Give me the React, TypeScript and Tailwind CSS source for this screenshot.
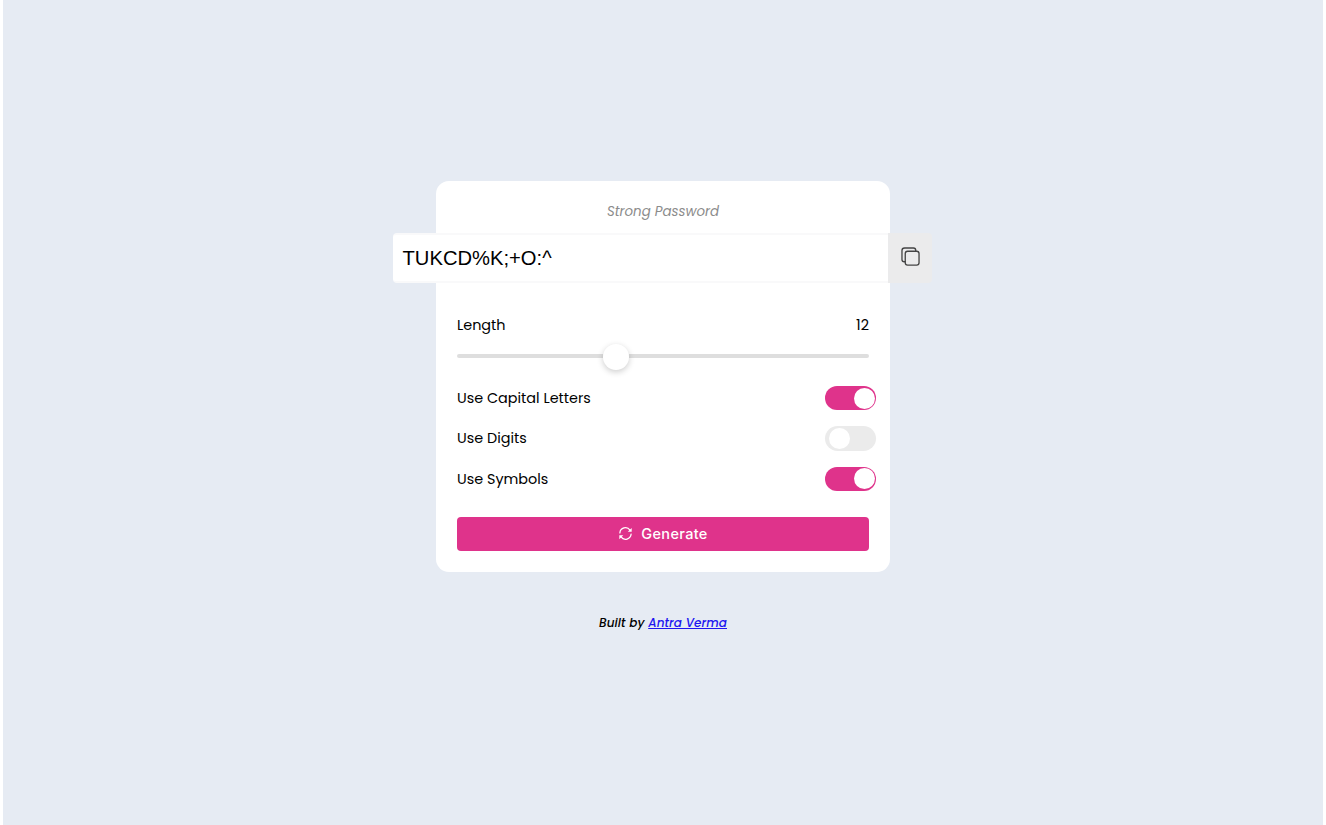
import { useState } from 'react';
import { IoCopyOutline } from 'react-icons/io5';

function SyncIcon() {
  return (
    <svg viewBox="0 0 16 16" className="size-[15px]" fill="none" stroke="currentColor" strokeWidth="1.35" aria-hidden="true">
      <path d="M2 7.4A6 6 0 0 1 12.8 4.3M14 8.6A6 6 0 0 1 3.2 11.7" strokeLinecap="round" />
      <path d="M14.6 2v4.2h-4.2zM1.4 14V9.8h4.2z" fill="currentColor" stroke="none" />
    </svg>
  );
}

function Toggle({ label, on, onChange }: { label: string; on: boolean; onChange: () => void }) {
  return (
    <div className="flex h-[40.3px] items-center justify-between">
      <span className="whitespace-nowrap pt-px text-[14.4px]">{label}</span>
      <button
        role="switch"
        aria-checked={on}
        aria-label={label}
        onClick={onChange}
        className={`-mr-[7px] flex h-[24.5px] w-[51px] shrink-0 items-center rounded-full ${on ? 'justify-end bg-[#df338b] pr-px' : 'justify-start bg-[#ebebeb] pl-[4px]'}`}
      >
        <span className="size-[21px] rounded-full bg-white" />
      </button>
    </div>
  );
}

export default function App() {
  const [capitals, setCapitals] = useState(true);
  const [digits, setDigits] = useState(false);
  const [symbols, setSymbols] = useState(true);

  return (
    <div className="h-[825px] bg-white px-[3px]">
      <main className="flex h-full flex-col items-center bg-[#e6ebf3] pt-[180.5px] font-['Poppins','Inter',sans-serif] text-black">
        <section className="flex h-[391.5px] w-[454px] flex-col rounded-[13px] bg-white px-[21px]">
          <h1 className="flex h-[52px] items-center justify-center pt-[11px] text-[13.4px] font-normal italic text-[#8c8c8c]">
            Strong Password
          </h1>
          <div className="-mx-[64px] flex h-[50px] shrink-0">
            <div className="flex w-[495px] items-center rounded-l-[4px] border-y-2 border-[#f9f9fa] bg-white pl-[9.5px] pt-px font-['Liberation_Sans',sans-serif] text-[20.2px]">
              TUKCD%K;+O:^
            </div>
            <button aria-label="Copy" className="flex w-[44px] items-center justify-center rounded-r-[4px] bg-[#ebebec] pb-[3px] text-[#444]">
              <IoCopyOutline size={21} />
            </button>
          </div>
          <div className="mt-[33px] flex h-[20px] items-center justify-between text-[14.4px]">
            <span>Length</span>
            <span>12</span>
          </div>
          <div className="mt-[7px] flex h-[26px] items-center">
            <div className="h-[4px] w-[146px] rounded-l-full bg-[#dedede]" />
            <div className="relative top-px size-[26px] shrink-0 rounded-full bg-white shadow-[0_2px_6px_rgba(0,0,0,0.2)]" />
            <div className="h-[4px] flex-1 rounded-r-full bg-[#dedede]" />
          </div>
          <div className="mt-[9.6px]">
            <Toggle label="Use Capital Letters" on={capitals} onChange={() => setCapitals(!capitals)} />
            <Toggle label="Use Digits" on={digits} onChange={() => setDigits(!digits)} />
            <Toggle label="Use Symbols" on={symbols} onChange={() => setSymbols(!symbols)} />
          </div>
          <button className="mt-[18px] flex h-[34.5px] shrink-0 items-center justify-center gap-[8px] rounded-[4px] bg-[#df338b] font-['Inter',sans-serif] text-[14.5px] font-medium tracking-[0.35px] text-white">
            <span className="pb-[2px]"><SyncIcon /></span>
            <span>Generate</span>
          </button>
        </section>
        <footer className="mt-[41px] text-[12px] font-medium italic leading-[20px] tracking-[0.08px]">
          Built by <a href="#" className="text-[#2015f0] underline">Antra Verma</a>
        </footer>
      </main>
    </div>
  );
}
